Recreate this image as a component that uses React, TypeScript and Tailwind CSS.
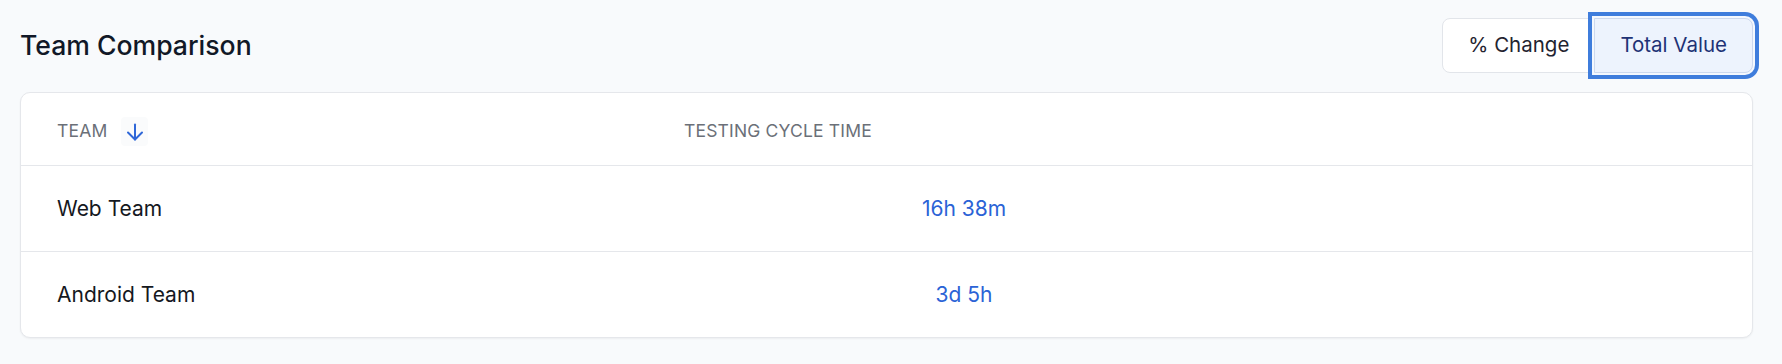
import React from "react";

const rows = [
  { team: "Web Team", value: "16h 38m" },
  { team: "Android Team", value: "3d 5h" },
];

export default function App() {
  return (
    <div
      className="min-h-screen w-full bg-[#f8fafc] pl-[20px] pr-[29px] pt-[18px]"
      style={{ fontFamily: "Inter, 'Noto Sans', sans-serif" }}
    >
      <div className="flex h-[55px] items-center justify-between">
        <h1 className="text-[26.6px] font-[450] leading-none text-[#111827]">
          Team Comparison
        </h1>
        <div className="flex h-[55px]">
          <button className="h-[55px] rounded-l-[8px] border border-[#e2e5ea] bg-white px-[25px] text-[20.5px] font-normal text-[#1f2430]">
            % Change
          </button>
          <button className="relative z-10 -ml-px h-[55px] rounded-r-[8px] border border-[#cdd9ee] bg-[#edf3fd] px-[25px] text-[20.5px] font-normal text-[#1e3275] ring-4 ring-[#3f7ddc] ring-offset-2 ring-offset-[#f4f8fe]">
            Total Value
          </button>
        </div>
      </div>

      <div className="mt-[19px] overflow-hidden rounded-[10px] border border-[#e5e7eb] bg-white shadow-[0_1px_2px_rgba(0,0,0,0.05)]">
        <div className="grid h-[73px] grid-cols-[627px_632px_1fr] items-center border-b border-[#e5e7eb] pt-[5px]">
          <div className="flex items-center pl-[36px]">
            <span className="text-[17.5px] uppercase tracking-[0.01em] text-[#6b7078]">Team</span>
            <span className="ml-[14px] flex h-[29px] w-[27px] items-center justify-center rounded-[4px] bg-[#fafbfc]">
              <svg width="18" height="18" viewBox="0 0 18 18" fill="none" stroke="#2f67d8" strokeWidth="2" strokeLinecap="round" strokeLinejoin="round">
                <path d="M9 1.5v15" />
                <path d="M2 9.5l7 7 7-7" />
              </svg>
            </span>
          </div>
          <div className="pl-[36px] text-[17.5px] uppercase tracking-[0.01em] text-[#6b7078]">
            Testing Cycle Time
          </div>
          <div />
        </div>
        {rows.map((r, i) => (
          <div
            key={r.team}
            className={
              i < rows.length - 1
                ? "grid h-[86px] grid-cols-[627px_632px_1fr] items-center border-b border-[#e5e7eb]"
                : "grid h-[85px] grid-cols-[627px_632px_1fr] items-center"
            }
          >
            <div className="pl-[36px] text-[21px] text-[#15181e]">{r.team}</div>
            <div className="text-center text-[21px] text-[#2b63d6]">{r.value}</div>
            <div />
          </div>
        ))}
      </div>
    </div>
  );
}
